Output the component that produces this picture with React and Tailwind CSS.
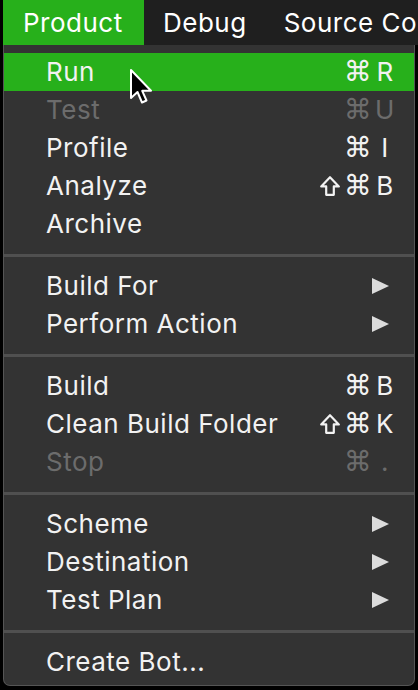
import React from 'react';

const sections = [
  [
    { label: 'Run', mods: ['cmd'], key: 'R', active: true },
    { label: 'Test', mods: ['cmd'], key: 'U', disabled: true },
    { label: 'Profile', mods: ['cmd'], key: 'I' },
    { label: 'Analyze', mods: ['shift', 'cmd'], key: 'B' },
    { label: 'Archive' },
  ],
  [
    { label: 'Build For', submenu: true },
    { label: 'Perform Action', submenu: true },
  ],
  [
    { label: 'Build', mods: ['cmd'], key: 'B' },
    { label: 'Clean Build Folder', mods: ['shift', 'cmd'], key: 'K' },
    { label: 'Stop', mods: ['cmd'], key: '.', disabled: true },
  ],
  [
    { label: 'Scheme', submenu: true },
    { label: 'Destination', submenu: true },
    { label: 'Test Plan', submenu: true },
  ],
  [{ label: 'Create Bot...' }],
];

const Cursor = () => (
  <svg className="absolute left-[124px] top-[15px]" width="28" height="38" viewBox="0 0 28 38">
    <path
      d="M3 2 L3 30 L9.5 24 L14 34.5 L18.5 32.5 L14.2 22.8 L23 22.8 Z"
      fill="#000"
      stroke="#fff"
      strokeWidth="2"
      strokeLinejoin="round"
    />
  </svg>
);

// outlined shift arrow (⇧)
const ShiftIcon = () => (
  <svg width="20" height="20" viewBox="0 0 20 20">
    <path
      d="M10 1.2 L18.8 10.4 L13.8 10.4 L13.8 18.8 L6.2 18.8 L6.2 10.4 L1.2 10.4 Z"
      fill="none"
      stroke="currentColor"
      strokeWidth="2.2"
      strokeLinejoin="round"
    />
  </svg>
);

const MenuItem = ({ item }) => {
  const color = item.disabled ? 'text-[#6c6c6c]' : 'text-[#f2f2f2]';
  return (
    <div
      className={`relative flex items-center h-[38px] pl-[42px] pr-[16px] ${
        item.active ? 'bg-[#27b01b]' : ''
      } ${color}`}
    >
      <span className="flex-1">{item.label}</span>
      {item.key && (
        <span className="flex items-center">
          {item.mods.map((m) =>
            m === 'shift' ? (
              <span key={m} className="w-[28px] flex justify-center" aria-label="⇧">
                <ShiftIcon />
              </span>
            ) : (
              <span key={m} className="w-[28px] text-center font-['DejaVu_Sans',sans-serif] text-[28px] tracking-normal">
                ⌘
              </span>
            )
          )}
          <span className="w-[26px] text-center">{item.key}</span>
        </span>
      )}
      {item.submenu && (
        <svg width="17" height="16" viewBox="0 0 17 16" className="mr-[9px]">
          <path d="M0 0 L17 8 L0 16 Z" fill="#dcdcdc" />
        </svg>
      )}
      {item.active && <Cursor />}
    </div>
  );
};

export default function App() {
  return (
    <div className="w-[418px] h-[690px] bg-black overflow-hidden font-['Inter',sans-serif] text-[26px] tracking-[0.5px] leading-none">
      <div className="ml-[3px] h-[45px] bg-[#1f1f1f] flex items-center text-white overflow-hidden">
        <div className="h-full w-[141px] shrink-0 bg-[#27b01b] flex items-center pl-[20px]">Product</div>
        <div className="pl-[19px] shrink-0">Debug</div>
        <div className="pl-[37px] shrink-0 whitespace-nowrap">Source Control</div>
      </div>
      <div className="ml-[3px] w-[412px] bg-[#333333] border-x border-b border-[#555555] rounded-b-[7px] pt-[8px] pb-[4px]">
        {sections.map((section, i) => (
          <div key={i}>
            {i > 0 && (
              <div className="h-[24px] flex items-center">
                <div className="h-[3px] w-full bg-[#505050]" />
              </div>
            )}
            {section.map((item) => (
              <MenuItem key={item.label} item={item} />
            ))}
          </div>
        ))}
      </div>
    </div>
  );
}
